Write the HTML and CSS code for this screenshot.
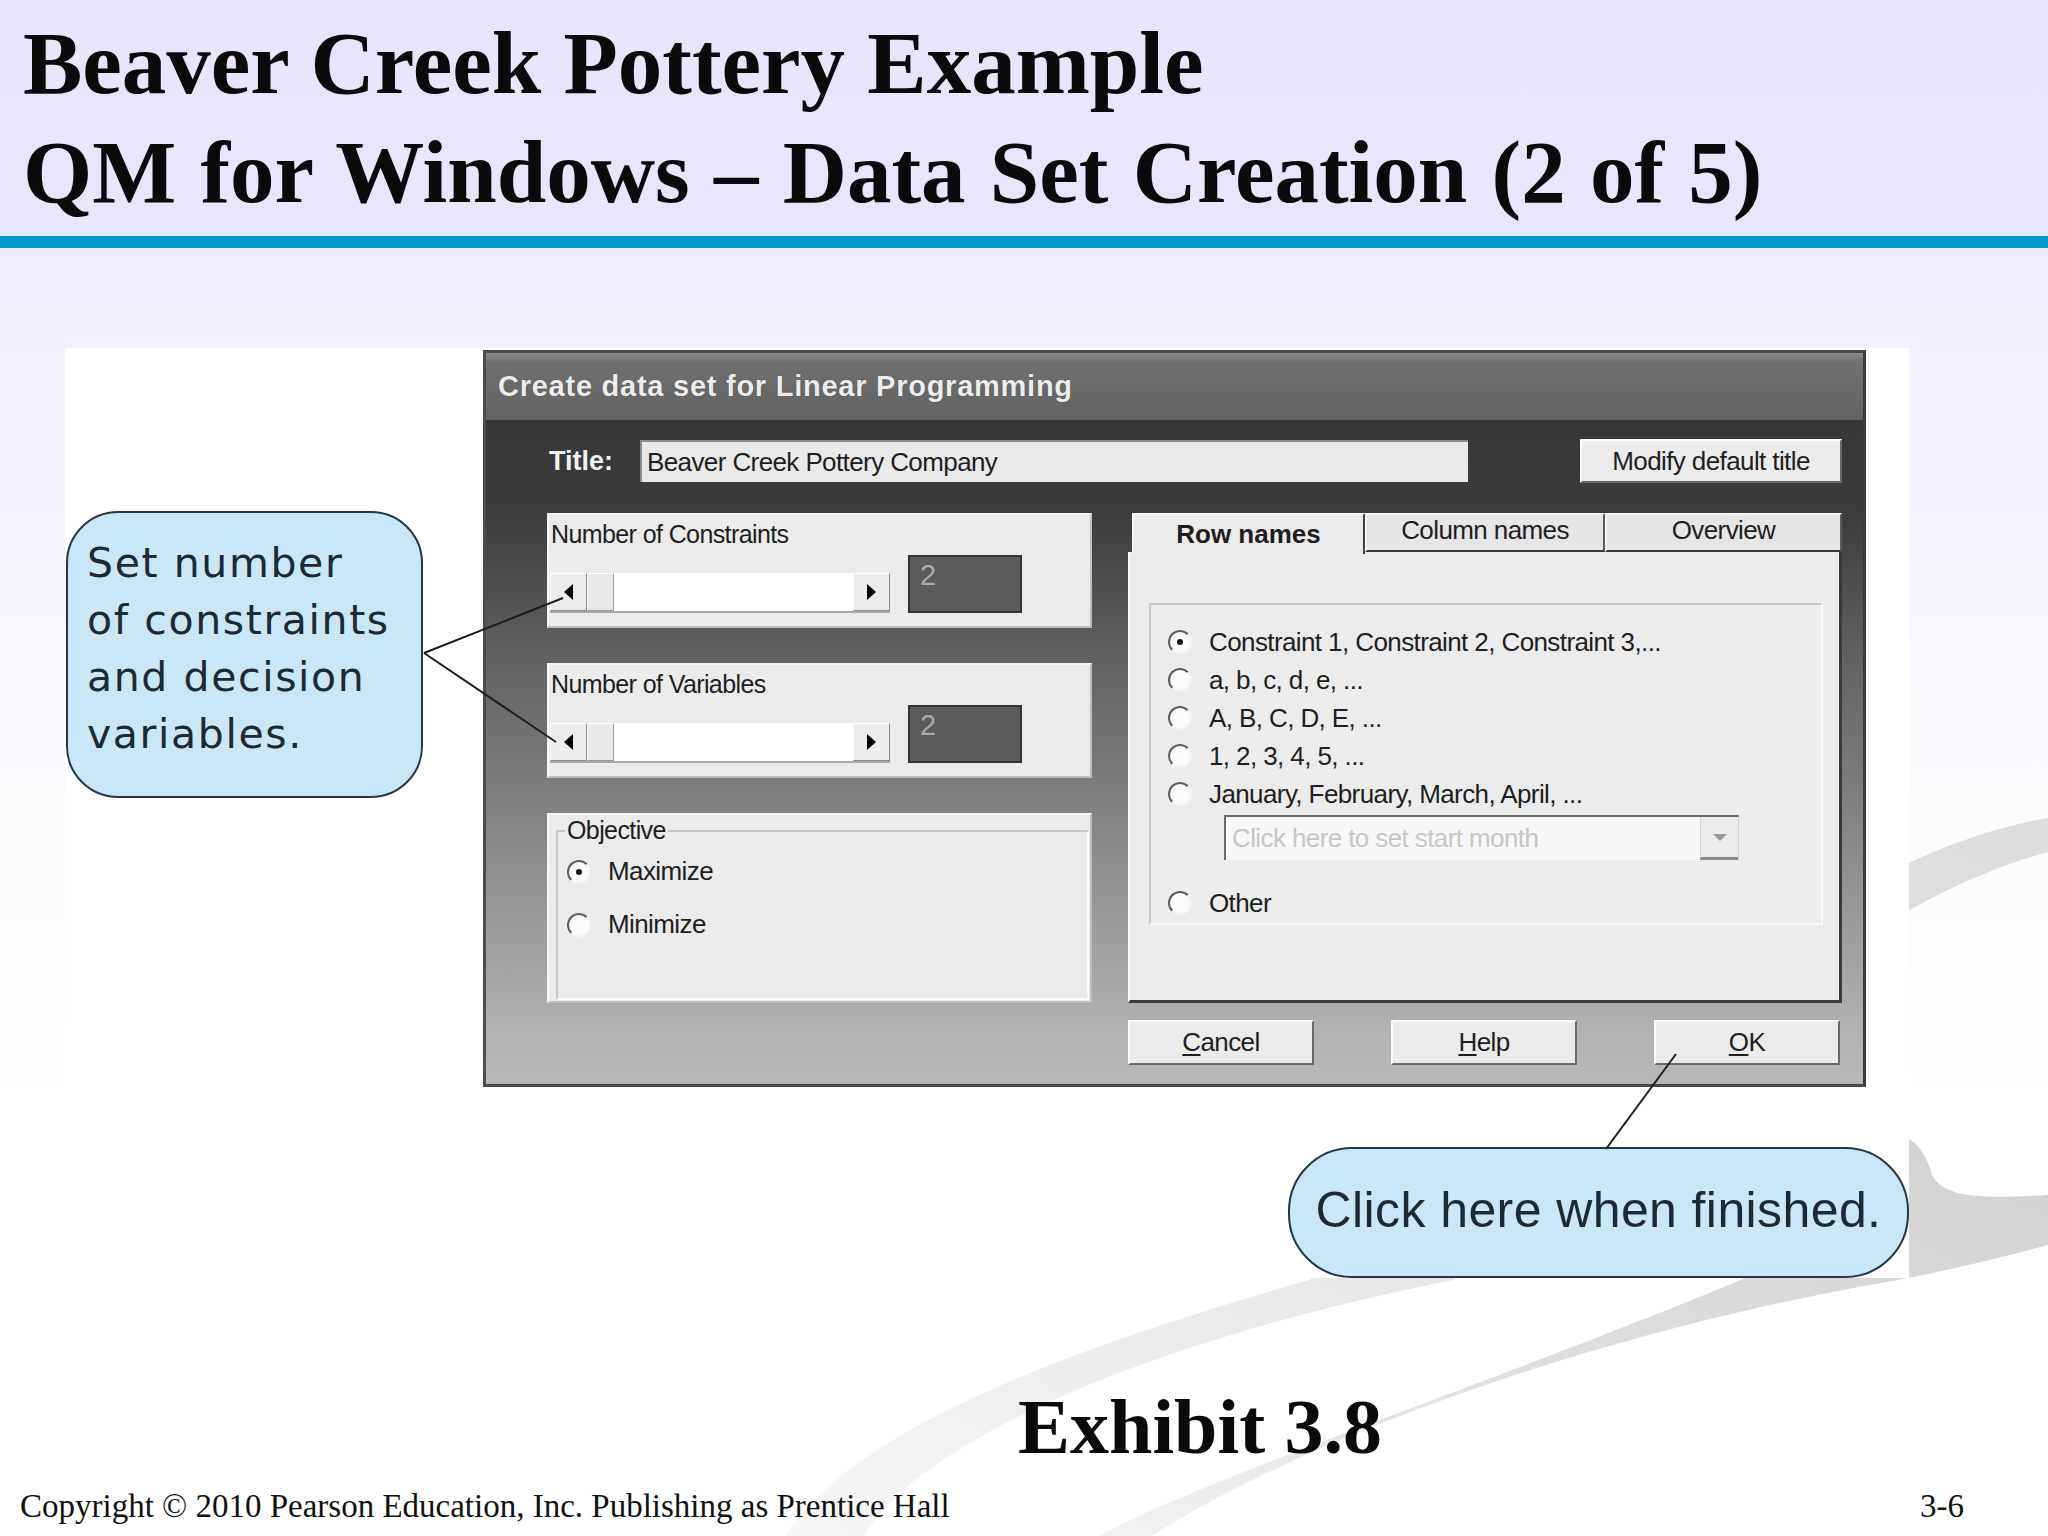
FILE: index.html
```html
<!DOCTYPE html>
<html>
<head>
<meta charset="utf-8">
<title>Beaver Creek Pottery Example</title>
<link rel="stylesheet" href="styles.css">
</head>
<body>
<div class="slide">
  <svg class="swoosh" width="2048" height="1536" viewBox="0 0 2048 1536" aria-hidden="true">
    <defs>
      <linearGradient id="g1" x1="1" y1="0" x2="0" y2="1">
        <stop offset="0" stop-color="#dcdcdc"/>
        <stop offset="0.6" stop-color="#e8e8e8"/>
        <stop offset="1" stop-color="#f7f7f7"/>
      </linearGradient>
      <linearGradient id="g2" x1="1" y1="0" x2="0" y2="1">
        <stop offset="0" stop-color="#d2d2d2"/>
        <stop offset="0.55" stop-color="#dedede"/>
        <stop offset="1" stop-color="#f3f3f3"/>
      </linearGradient>
    </defs>
    <path d="M1309 1280 C1100 1340 860 1420 785 1536 L864 1536 C920 1440 1150 1340 1453 1280 C1650 1150 1800 920 2048 852 L2048 818 C1800 860 1500 1150 1309 1280 Z" fill="url(#g1)"/>
    <path d="M1741 1280 C1500 1380 1200 1480 1099 1536 L1152 1536 C1300 1440 1600 1330 1898 1280 C1960 1268 2010 1255 2048 1245 L2048 1195 C1990 1198 1945 1200 1932 1175 C1925 1150 1915 1140 1900 1135 C1850 1190 1800 1250 1741 1280 Z" fill="url(#g2)"/>
  </svg>

  <header class="head">
    <h1><span>Beaver Creek Pottery Example</span><span class="sub">QM for Windows – Data Set Creation (2 of 5)</span></h1>
  </header>
  <div class="rule"></div>

  <figure class="exhibit">
    <div class="dlg">
      <div class="dlg-title">Create data set for Linear Programming</div>
      <div class="dlg-body">
        <div class="title-row">
          <span class="title-lbl">Title:</span>
          <div class="input">Beaver Creek Pottery Company</div>
          <div class="btn btn-wide">Modify default title</div>
        </div>
        <div class="main-row">
          <div class="left-col">
            <div class="group">
              <div class="glabel">Number of Constraints</div>
              <div class="spin-row">
                <div class="sb"><span class="sb-btn"><i class="tri-l"></i></span><span class="sb-thumb"></span><span class="sb-track"></span><span class="sb-btn"><i class="tri-r"></i></span></div>
                <div class="val">2</div>
              </div>
            </div>
            <div class="group">
              <div class="glabel">Number of Variables</div>
              <div class="spin-row">
                <div class="sb"><span class="sb-btn"><i class="tri-l"></i></span><span class="sb-thumb"></span><span class="sb-track"></span><span class="sb-btn"><i class="tri-r"></i></span></div>
                <div class="val">2</div>
              </div>
            </div>
            <div class="group group-obj">
              <fieldset class="obj">
                <legend>Objective</legend>
                <div class="orow"><span class="radio on"></span>Maximize</div>
                <div class="orow"><span class="radio"></span>Minimize</div>
              </fieldset>
            </div>
          </div>
          <div class="tabs">
            <div class="tab-strip">
              <div class="tab active">Row names</div>
              <div class="tab">Column names</div>
              <div class="tab">Overview</div>
            </div>
            <div class="tab-body">
              <div class="names">
                <div class="rrow"><span class="radio on"></span>Constraint 1, Constraint 2, Constraint 3,...</div>
                <div class="rrow"><span class="radio"></span>a, b, c, d, e, ...</div>
                <div class="rrow"><span class="radio"></span>A, B, C, D, E, ...</div>
                <div class="rrow"><span class="radio"></span>1, 2, 3, 4, 5, ...</div>
                <div class="rrow"><span class="radio"></span>January, February, March, April, ...</div>
                <div class="combo"><span class="combo-text">Click here to set start month</span><span class="combo-btn"><i class="tri-d"></i></span></div>
                <div class="rrow rrow-other"><span class="radio"></span>Other</div>
              </div>
            </div>
          </div>
        </div>
        <div class="btn-row">
          <div class="btn"><span><u>C</u>ancel</span></div>
          <div class="btn"><span><u>H</u>elp</span></div>
          <div class="btn"><span><u>O</u>K</span></div>
        </div>
      </div>
    </div>

    <div class="callout callout-left">Set number<br>of constraints<br>and decision<br>variables.</div>
    <div class="callout callout-ok">Click here when finished.</div>

    <svg class="leaders" width="1844" height="930" viewBox="0 0 1844 930" aria-hidden="true">
      <line x1="359" y1="305" x2="498" y2="250"/>
      <line x1="359" y1="305" x2="491" y2="394"/>
      <line x1="1541" y1="801" x2="1611" y2="706"/>
    </svg>
  </figure>

  <div class="caption">Exhibit 3.8</div>

  <footer class="foot">
    <span>Copyright © 2010 Pearson Education, Inc. Publishing as Prentice Hall</span>
    <span>3-6</span>
  </footer>
</div>
</body>
</html>
```
FILE: styles.css
```css
html, body {
  margin: 0;
  padding: 0;
}

.slide {
  width: 2048px;
  height: 1536px;
  position: relative;
  overflow: hidden;
  background: linear-gradient(#e6e5fa 0px, #e7e6fa 236px, #efeefc 260px, #f4f3fd 420px, #fbfbfe 800px, #ffffff 1100px);
  font-family: "Liberation Serif", "Times New Roman", serif;
  color: #0b0b0b;
}

.swoosh {
  position: absolute;
  left: 0;
  top: 0;
  z-index: 0;
}

/* ---------- header ---------- */
.head {
  position: relative;
  z-index: 1;
  height: 236px;
  box-sizing: border-box;
  padding: 9px 0 0 23px;
}

.head h1 {
  margin: 0;
  font: bold 89px/109px "Liberation Serif", "Times New Roman", serif;
  color: #0a0a0a;
}

.head h1 span {
  display: block;
  white-space: nowrap;
}

.head h1 .sub {
  word-spacing: 2px;
}

.rule {
  position: relative;
  z-index: 1;
  height: 12px;
  background: #0099cc;
}

/* ---------- exhibit picture ---------- */
.exhibit {
  position: relative;
  z-index: 1;
  margin: 100px 0 0 65px;
  width: 1844px;
  height: 930px;
  box-sizing: border-box;
  padding: 2px 0 0 418px;
  background: #ffffff;
}

.dlg {
  width: 1383px;
  height: 737px;
  box-sizing: border-box;
  border: 3px solid #4c4c4c;
  border-right-color: #3a3a3a;
  border-bottom-color: #4a4a4a;
  display: flex;
  flex-direction: column;
  font-family: "Liberation Sans", Arial, sans-serif;
  letter-spacing: -0.6px;
  color: #1e1e1e;
}

.dlg-title {
  flex: none;
  height: 67px;
  display: flex;
  align-items: center;
  padding-left: 12px;
  background: linear-gradient(#8c8c8c 0, #707070 14%, #686868 60%, #636363 100%);
  color: #ededed;
  font-weight: bold;
  font-size: 29px;
  letter-spacing: 0.75px;
  text-shadow: 0 0 1px #3a3a3a;
}

.dlg-body {
  flex: 1;
  padding: 19px 21px 19px 61px;
  background: linear-gradient(#363636 0%, #3c3c3c 14%, #5d5d5d 33%, #8a8a8a 64%, #b3b3b3 93%, #b8b8b8 100%);
}

.title-row {
  display: flex;
  align-items: center;
  height: 44px;
}

.title-lbl {
  width: 91px;
  margin-left: 2px;
  color: #f2f2f2;
  font-weight: bold;
  font-size: 27px;
  letter-spacing: 0;
}

.input {
  width: 828px;
  height: 42px;
  box-sizing: border-box;
  display: flex;
  align-items: center;
  padding-left: 5px;
  background: #e9e9e9;
  border-top: 2px solid #8c8c8c;
  border-left: 2px solid #8c8c8c;
  font-size: 26px;
}

.btn {
  box-sizing: border-box;
  display: flex;
  align-items: center;
  justify-content: center;
  background: #ebebeb;
  border: 2px solid;
  border-color: #fbfbfb #6a6a6a #6a6a6a #fbfbfb;
  font-size: 26px;
}

.btn u {
  text-decoration-thickness: 2px;
  text-underline-offset: 3px;
}

.btn-wide {
  margin-left: auto;
  width: 262px;
  height: 44px;
}

.main-row {
  display: flex;
  gap: 36px;
  margin-top: 30px;
  height: 490px;
}

.left-col {
  width: 545px;
  display: flex;
  flex-direction: column;
  gap: 35px;
}

.group {
  height: 115px;
  box-sizing: border-box;
  padding: 5px 2px 0 2px;
  background: #ebebeb;
  border: 2px solid;
  border-color: #f7f7f7 #bdbdbd #bdbdbd #f7f7f7;
}

.glabel {
  font-size: 25px;
  line-height: 29px;
}

.spin-row {
  display: flex;
  align-items: flex-end;
  margin-top: 6px;
}

.sb {
  width: 340px;
  height: 40px;
  margin-left: -1px;
  display: flex;
  box-sizing: border-box;
  border-bottom: 2px solid #a8a8a8;
}

.sb-btn {
  width: 37px;
  box-sizing: border-box;
  display: flex;
  align-items: center;
  justify-content: center;
  background: #ececec;
  border: 1px solid;
  border-color: #ffffff #8a8a8a #8a8a8a #ffffff;
}

.sb-thumb {
  width: 27px;
  box-sizing: border-box;
  background: #e8e8e8;
  border: 1px solid;
  border-color: #ffffff #9a9a9a #9a9a9a #ffffff;
}

.sb-track {
  flex: 1;
  background: #ffffff;
}

.tri-l {
  width: 0;
  height: 0;
  border-right: 9px solid #000;
  border-top: 8px solid transparent;
  border-bottom: 8px solid transparent;
}

.tri-r {
  width: 0;
  height: 0;
  border-left: 9px solid #000;
  border-top: 8px solid transparent;
  border-bottom: 8px solid transparent;
}

.tri-d {
  width: 0;
  height: 0;
  border-top: 7px solid #9a9a9a;
  border-left: 7px solid transparent;
  border-right: 7px solid transparent;
}

.val {
  width: 114px;
  height: 58px;
  margin-left: 18px;
  box-sizing: border-box;
  padding: 2px 0 0 10px;
  background: #5b5b5b;
  border: 2px solid #333333;
  color: #a9a9a9;
  font-size: 29px;
  line-height: 32px;
}

.group-obj {
  height: 190px;
  padding: 1px 1px 0 7px;
}

.obj {
  margin: 0;
  height: 184px;
  box-sizing: border-box;
  padding: 0 0 0 9px;
  border: 2px solid;
  border-color: #c6c6c6 #fbfbfb #fbfbfb #c6c6c6;
}

.obj legend {
  padding: 0 2px;
  margin-left: -2px;
  font-size: 25px;
  line-height: 29px;
}

.orow {
  display: flex;
  align-items: center;
  height: 53px;
  font-size: 26px;
}

.radio {
  flex: none;
  position: relative;
  width: 24px;
  height: 24px;
  box-sizing: border-box;
  margin-right: 17px;
  border-radius: 50%;
  border: 2px solid;
  border-color: #5e5e5e #f4f4f4 #f4f4f4 #5e5e5e;
  background: #fbfbfb;
}

.radio.on::after {
  content: "";
  position: absolute;
  left: 7px;
  top: 7px;
  width: 6px;
  height: 6px;
  border-radius: 50%;
  background: #111111;
}

/* ---------- tab panel ---------- */
.tabs {
  width: 714px;
  display: flex;
  flex-direction: column;
}

.tab-strip {
  display: flex;
  height: 39px;
  padding-left: 4px;
}

.tab {
  box-sizing: border-box;
  display: flex;
  align-items: center;
  justify-content: center;
  padding-bottom: 4px;
  background: #e6e6e6;
  border-top: 2px solid #f8f8f8;
  border-left: 2px solid #f8f8f8;
  border-right: 2px solid #5a5a5a;
  border-bottom: 2px solid #3a3a3a;
  font-size: 26px;
}

.tab:nth-child(1) { width: 233px; }
.tab:nth-child(2) { width: 240px; }
.tab:nth-child(3) { width: 237px; }

.tab.active {
  position: relative;
  z-index: 1;
  height: 41px;
  padding-bottom: 0;
  background: #ececec;
  border-bottom: none;
  border-right-color: #444444;
  font-weight: bold;
  letter-spacing: 0;
}

.tab-body {
  flex: 1;
  box-sizing: border-box;
  padding: 51px 16px 0 19px;
  background: #ececec;
  border-left: 2px solid #fafafa;
  border-right: 3px solid #3a3a3a;
  border-bottom: 3px solid #3a3a3a;
}

.names {
  padding: 18px 0 1px 0;
  border: 2px solid;
  border-color: #c8c8c8 #fafafa #fafafa #c8c8c8;
}

.rrow {
  display: flex;
  align-items: center;
  height: 38px;
  padding-left: 17px;
  font-size: 26px;
}

.rrow-other {
  margin-top: 24px;
}

.combo {
  width: 515px;
  height: 45px;
  margin: 2px 0 0 73px;
  box-sizing: border-box;
  display: flex;
  align-items: center;
  background: #f8f8f8;
  border-top: 2px solid #6a6a6a;
  border-left: 2px solid #6a6a6a;
  border-right: 1px solid #cfcfcf;
}

.combo-text {
  padding-left: 6px;
  color: #c6c6c6;
  font-size: 26px;
}

.combo-btn {
  margin-left: auto;
  width: 38px;
  height: 100%;
  box-sizing: border-box;
  display: flex;
  align-items: center;
  justify-content: center;
  background: #ececec;
  border-left: 1px solid #d6d6d6;
  border-bottom: 3px solid #8a8a8a;
}

.btn-row {
  display: flex;
  gap: 77px;
  margin: 17px 0 0 581px;
}

.btn-row .btn {
  width: 186px;
  height: 45px;
}

/* ---------- callouts ---------- */
.callout {
  position: absolute;
  box-sizing: border-box;
  background: #c8e8f9;
  border: 2.5px solid #27363f;
  color: #1b2a33;
}

.callout-left {
  left: 1px;
  top: 163px;
  width: 357px;
  height: 287px;
  border-radius: 52px;
  padding: 22px 0 0 19px;
  font: 41px/57px "DejaVu Sans", Verdana, sans-serif;
  letter-spacing: 1.6px;
  white-space: nowrap;
}

.callout-ok {
  left: 1223px;
  top: 799px;
  width: 621px;
  height: 131px;
  border-radius: 64px;
  display: flex;
  align-items: center;
  justify-content: center;
  padding-bottom: 6px;
  font: 50px "Liberation Sans", Arial, sans-serif;
  letter-spacing: 0.4px;
}

.leaders {
  position: absolute;
  left: 0;
  top: 0;
  pointer-events: none;
}

.leaders line {
  stroke: #1c1c1c;
  stroke-width: 2;
}

/* ---------- caption & footer ---------- */
.caption {
  position: relative;
  z-index: 1;
  margin-top: 104px;
  padding-left: 1018px;
  font: bold 78px/90px "Liberation Serif", "Times New Roman", serif;
  color: #0a0a0a;
}

.foot {
  position: relative;
  z-index: 1;
  margin-top: 14px;
  display: flex;
  justify-content: space-between;
  padding: 0 84px 0 20px;
  font: 33px/40px "Liberation Serif", "Times New Roman", serif;
  color: #111111;
}
```
